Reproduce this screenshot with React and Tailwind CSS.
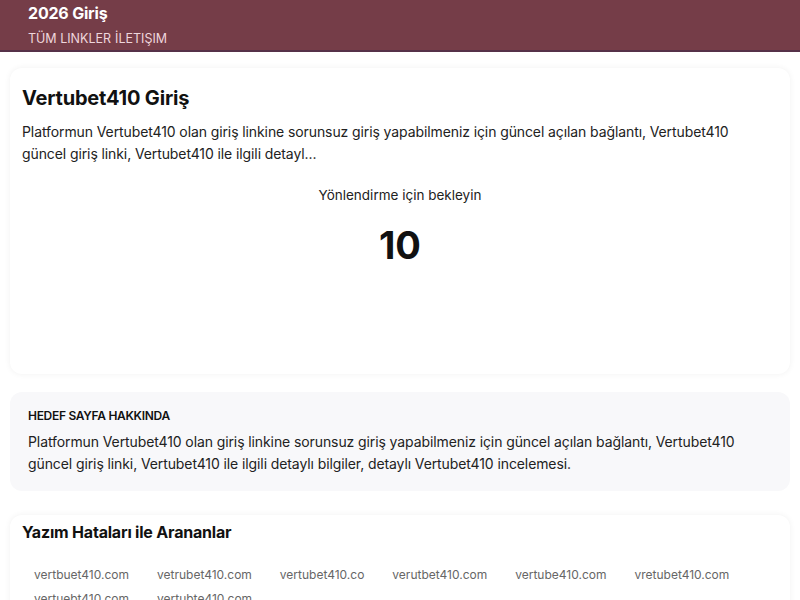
import React from 'react';

const typos = [
  'vertbuet410.com',
  'vetrubet410.com',
  'vertubet410.co',
  'verutbet410.com',
  'vertube410.com',
  'vretubet410.com',
  'vertuebt410.com',
  'vertubte410.com',
];

export default function App() {
  return (
    <div className="min-h-screen bg-white text-[#111] font-['Inter','Noto_Sans',sans-serif]">
      {/* Üst bar */}
      <header className="bg-[#753d48] border-b-2 border-[#563149] px-7 pt-[3px] pb-[3px]">
        <div className="text-white font-bold text-[16px] leading-[20px] tracking-[-0.2px]">2026 Giriş</div>
        <nav className="flex gap-1 mt-[8px] text-[12.5px] leading-[16px] text-[#efd6dc]">
          <span>TÜM LINKLER</span>
          <span>İLETIŞIM</span>
        </nav>
      </header>

      <main className="px-[10px] pt-[16px]">
        {/* Ana kart */}
        <section className="bg-white rounded-xl shadow-[0_0_6px_rgba(0,0,0,0.06)] px-3 pt-[17px] h-[306px]">
          <h1 className="text-[20px] leading-[26px] font-bold tracking-[-0.2px]">Vertubet410 Giriş</h1>
          <p className="mt-[10px] pr-8 text-[14px] leading-[22px] tracking-[-0.1px] text-[#222]">
            Platformun Vertubet410 olan giriş linkine sorunsuz giriş yapabilmeniz için güncel açılan bağlantı, Vertubet410 güncel giriş linki, Vertubet410 ile ilgili detayl...
          </p>
          <div className="flex flex-col items-center mt-[20px]">
            <p className="text-[13.5px] leading-[20px] text-[#222]">Yönlendirme için bekleyin</p>
            <div className="mt-[19px] text-[38px] leading-[42px] font-bold">10</div>
          </div>
        </section>

        {/* Hedef sayfa */}
        <section className="mt-[18px] bg-[#f8f8fa] rounded-xl px-[18px] pt-[16px] pb-[16px]">
          <h2 className="text-[12px] leading-[16px] font-semibold tracking-[-0.3px] text-[#111]">HEDEF SAYFA HAKKINDA</h2>
          <p className="mt-[7px] text-[14px] leading-[22px] tracking-[-0.1px] text-[#222]">
            Platformun Vertubet410 olan giriş linkine sorunsuz giriş yapabilmeniz için güncel açılan bağlantı, Vertubet410 güncel giriş linki, Vertubet410 ile ilgili detaylı bilgiler, detaylı Vertubet410 incelemesi.
          </p>
        </section>

        {/* Yazım hataları */}
        <section className="mt-[24px] bg-white rounded-xl shadow-[0_0_6px_rgba(0,0,0,0.06)] px-3 pt-[6px] pb-4">
          <h2 className="text-[16px] leading-[22px] font-bold tracking-[-0.2px]">Yazım Hataları ile Arananlar</h2>
          <div className="mt-[21px] flex flex-wrap gap-x-[4px] gap-y-[2px]">
            {typos.map((t) => (
              <span key={t} className="px-3 py-[2px] text-[12px] leading-[18px] text-[#666]">{t}</span>
            ))}
          </div>
        </section>
      </main>
    </div>
  );
}
